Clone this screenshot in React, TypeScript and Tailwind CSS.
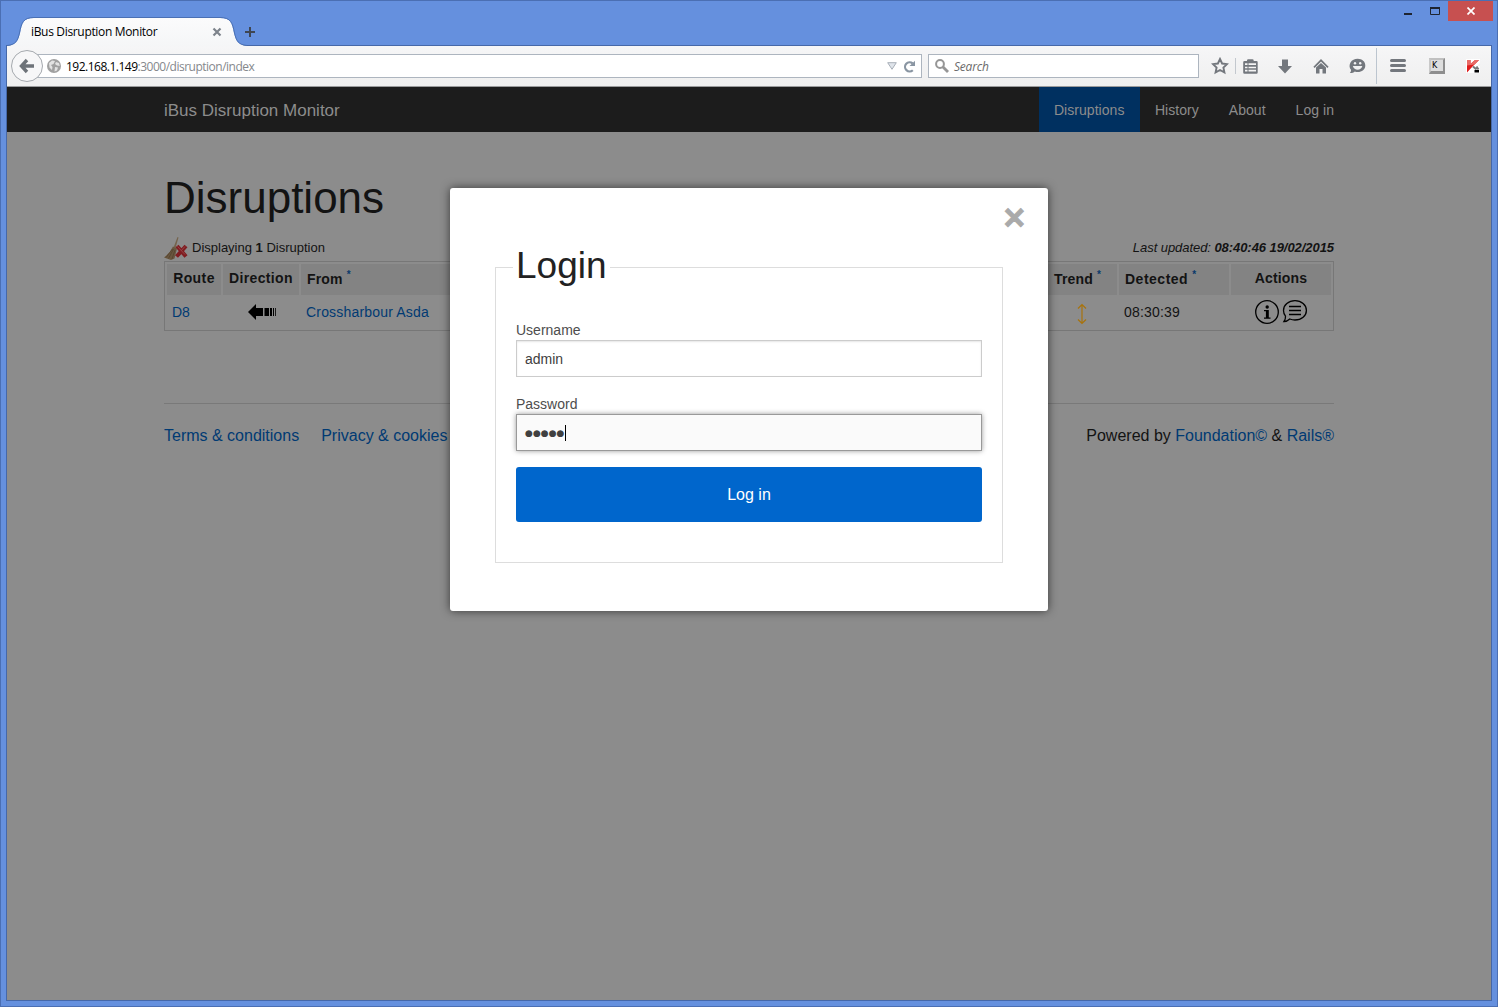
import type { ReactNode } from "react";

const ui = "font-['Open_Sans','Noto_Sans',sans-serif]";

function TabStrip() {
  return (
    <div className="flex h-[44px] shrink-0 items-start justify-between">
      <div className="relative flex h-[44px] items-center pl-[30px] pt-[18px]">
        <svg className="absolute left-[5px] top-[15px]" width="242" height="32" viewBox="6 16 242 32">
          <defs>
            <linearGradient id="tab" x1="0" y1="0" x2="0" y2="1">
              <stop offset="0" stopColor="#fbfbfc" />
              <stop offset="1" stopColor="#f5f6f7" />
            </linearGradient>
          </defs>
          <path
            d="M7 46 C16 45 18 41 20 33 C22 23 23 18 34 18 H220 C231 18 232 23 234 33 C236 41 238 45 247 46 V47 H7Z"
            fill="url(#tab)"
          />
          <path
            d="M7 45.5 C16 44.5 17.5 41 19.5 33 C21.5 23 23 17.5 34 17.5 H220 C231 17.5 232.500 23 234.500 33 C236.500 41 238 44.500 247 45.500"
            fill="none"
            stroke="#4a70b4"
          />
        </svg>
        <span className="relative w-[181px] text-[12px] leading-[18px] tracking-[-0.33px] text-black">iBus Disruption Monitor</span>
        <svg className="relative" width="10" height="10" viewBox="0 0 10 10">
          <path d="M1.500 1.500 8.500 8.500M8.500 1.500 1.500 8.500" stroke="#7d838b" strokeWidth="2.200" />
        </svg>
        <svg className="relative ml-[22px]" width="12" height="12" viewBox="0 0 12 12">
          <path d="M6 1v10M1 6h10" stroke="#3f4652" strokeWidth="2" />
        </svg>
      </div>
      <div className="mr-[4px] flex h-[20px] items-center">
        <svg width="8" height="2" viewBox="0 0 8 2" className="mr-[18px] mt-[6px]">
          <rect width="8" height="2" fill="#1e2430" />
        </svg>
        <svg width="10" height="8" viewBox="0 0 10 8" className="mr-[8px] -mt-px">
          <path d="M.5 1v6.500h9V1" fill="none" stroke="#1e2430" />
          <path d="M0 1h10" stroke="#1e2430" strokeWidth="2" />
        </svg>
        <div className="flex h-[20px] w-[45px] items-center justify-center bg-[#c75050]">
          <svg width="8" height="8" viewBox="0 0 8 8">
            <path d="M.5.5l7 7M7.500.5l-7 7" stroke="#fff" strokeWidth="1.700" />
          </svg>
        </div>
      </div>
    </div>
  );
}

function Toolbar() {
  return (
    <div className="relative h-[41px] shrink-0 border-b border-[#9a9b9c] bg-linear-to-b from-[#f6f6f7] to-[#efefef]">
      <div className="flex h-full items-center">
        <div className="relative z-10 ml-[4px] flex size-[32px] shrink-0 items-center justify-center rounded-full border border-[#a5a9ae] bg-[#f7f7f8]">
          <svg width="16" height="16" viewBox="0 0 16 16">
            <path d="M8 2 2.500 8 8 14M3 8h12" fill="none" stroke="#6e7379" strokeWidth="3.400" />
          </svg>
        </div>
        <div className="-ml-[8px] flex h-[24px] w-[887px] items-center border border-[#adb5bf] bg-white pl-[11px]">
          <svg width="14" height="14" viewBox="0 0 14 14">
            <circle cx="7" cy="7" r="7" fill="#a0a0a0" />
            <path d="M2 4 5 1.500 8 2 6.500 5 4 6 5.500 8 5 11 2.500 8.500ZM9 3l3 1 .8 3L10 6.500 8 5ZM8 8l3 .5-1 3-2.500 1Z" fill="#e2e2e2" />
          </svg>
          <span className="ml-[5px] pt-px text-[12px] leading-[18px] tracking-[-0.5px] text-[#85888c]">
            <span className="text-black">192.168.1.149</span>:3000/disruption/index
          </span>
          <svg className="ml-auto" width="10" height="8" viewBox="0 0 10 8">
            <path d="M.7.700h8.600L5 7.300Z" fill="#dfe4ea" stroke="#a8afb8" />
          </svg>
          <svg className="ml-[6px] mr-[5px]" width="13" height="13" viewBox="0 0 13 13">
            <path d="M9.800 10.200A4.600 4.600 0 1 1 9.600 3.300" fill="none" stroke="#8995a2" strokeWidth="2.200" />
            <path d="M12 .8V6H6.500Z" fill="#8995a2" />
          </svg>
        </div>
        <div className="ml-[6px] flex h-[24px] w-[271px] items-center border border-[#adb5bf] bg-white pl-[6px]">
          <svg width="14" height="14" viewBox="0 0 14 14">
            <circle cx="5" cy="5" r="3.900" fill="none" stroke="#969696" strokeWidth="2" />
            <path d="m8 8 5 5" stroke="#969696" strokeWidth="2.800" />
          </svg>
          <span className="ml-[5px] pt-px text-[12px] italic leading-[18px] tracking-[-0.2px] text-[#6b6b6b]">Search</span>
        </div>
        <svg className="ml-[12px]" width="18" height="18" viewBox="0 0 18 18">
          <path d="m9 2 2.100 4.500 4.900.6-3.600 3.400 1 4.900L9 13l-4.400 2.400 1-4.900L2 7.100l4.900-.6Z" fill="none" stroke="#73777d" strokeWidth="1.900" />
        </svg>
        <div className="ml-[6px] h-[16px] w-px bg-[#c3c8ce]" />
        <svg className="ml-[7px]" width="15" height="15" viewBox="0 0 15 15">
          <path d="M4 2V1.500Q4 .2 5.300.2h4Q10.700.2 10.700 1.500V2H13.500Q14.700 2 14.700 3.200V13.500Q14.700 14.800 13.500 14.800H1.500Q.2 14.800.2 13.500V3.200Q.2 2 1.500 2Z" fill="#73777d" />
          <path d="M2 5.200h2.500M5.500 5.200h7.500M2 8.500h2.500M5.500 8.500h7.500M2 11.700h2.500M5.500 11.700h7.500" stroke="#f4f4f4" strokeWidth="1.700" />
        </svg>
        <svg className="ml-[20px]" width="15" height="15" viewBox="0 0 15 15">
          <path d="M4 .5h6V7H14L7 14.500 0 7H4Z" fill="#73777d" />
        </svg>
        <svg className="ml-[20px]" width="17" height="15" viewBox="0 0 17 15">
          <path d="M1 8.300 8 1.300 15 8.300" fill="none" stroke="#73777d" strokeWidth="1.700" />
          <path d="M3 8.500 8 4l5 4.500V14.500H9.500V10h-3v4.500H3Z" fill="#73777d" />
        </svg>
        <svg className="ml-[19px]" width="17" height="16" viewBox="0 0 17 16">
          <path d="M8.700.8C13 .8 16.300 3.600 16.300 7.500S13 14 8.700 14c-1 0-2-.1-2.900-.5C4.500 14.700 2.500 15.200.8 15c1-.8 1.300-2 1.200-3.200C.2 9.500.1 7 1.500 4.400 3 2.100 5.600.8 8.700.8Z" fill="#73777d" />
          <circle cx="6" cy="5.200" r="1.200" fill="#f2f2f2" />
          <circle cx="11.200" cy="5.200" r="1.200" fill="#f2f2f2" />
          <path d="M3.800 8h9.600Q12 11.800 8.600 11.800T3.800 8Z" fill="#f2f2f2" />
        </svg>
        <div className="ml-[10px] h-[36px] w-px bg-[#bcc5cf]" />
        <svg className="ml-[13px]" width="16" height="14" viewBox="0 0 16 14">
          <path d="M1.500 1.500h13M1.500 6.500h13M1.500 11.500h13" stroke="#73777d" strokeWidth="3" strokeLinecap="round" />
        </svg>
        <div className="ml-[23px] flex h-[16px] w-[16px] items-start justify-start border-2 border-b-[3px] border-l-[#c9c9c9] border-t-[#c0c0c0] border-r-[#8e8e8e] border-b-[#8e8e8e] bg-[#dedede] pl-px">
          <span className="font-['DejaVu_Sans'] text-[8px] leading-[11px] text-black">K</span>
        </div>
        <svg className="ml-[21px]" width="15" height="15" viewBox="0 0 15 15">
          <path d="M0 0h14v4l-3 3h3v7H0Z" fill="#fff" />
          <path d="M1 1h3.500v4L9 1h4L6.500 7.500 1 13.500Z" fill="#e01c1c" />
          <path d="M1 1h3.500v4L9 1h4L8.500 5.500 1 6.500Z" fill="#e86b66" />
          <path d="m7 7.500 3.500 3M10.500 7.500 12.500 10.500" stroke="#777" strokeWidth="2" fill="none" />
          <path d="M8.500 11H13V13.500H8.500Z" fill="#000" />
        </svg>
      </div>
    </div>
  );
}

function NavItem({ label, active = false }: { label: string; active?: boolean }) {
  return (
    <a className={active ? "w-[101px] bg-[#003060] px-[15px] text-[#8c8c8c]" : "px-[15px] text-[#8c8c8c]"}>{label}</a>
  );
}

function HeadCell({ children, star = false, center = false }: { children: ReactNode; star?: boolean; center?: boolean }) {
  return (
    <div className={center ? "flex justify-center bg-[#838383] leading-[29px]" : "flex bg-[#838383] pl-[6px] leading-[31px]"}>
      {children}
      {star && <span className="ml-[4px] text-[10px] leading-[22px] text-[#0a3a6b]">*</span>}
    </div>
  );
}

function DisruptionTable() {
  const cols = "grid grid-cols-[54px_76px_minmax(0,1fr)_69px_110px_100px] gap-x-[2px]";
  return (
    <div className="h-[70px] border border-[#777777] p-[2px] text-[14px]">
      <div className={`${cols} h-[30px] font-bold tracking-[0.18px] text-[#131313]`}>
        <HeadCell center><span className="tracking-[0.4px]">Route</span></HeadCell>
        <HeadCell center><span className="tracking-[0.35px]">Direction</span></HeadCell>
        <HeadCell star>From</HeadCell>
        <HeadCell star>Trend</HeadCell>
        <HeadCell star><span className="tracking-[0.5px]">Detected</span></HeadCell>
        <HeadCell center>Actions</HeadCell>
      </div>
      <div className={`${cols} h-[34px] items-center text-[#131313]`}>
        <span className="pl-[5px] pt-[2px] text-[#003a73]">D8</span>
        <svg className="ml-[25px] mt-[2px]" width="28" height="16" viewBox="0 0 28 16">
          <path d="M0 8 8 0v4h7v8H8v4Z" fill="#000" />
          <path d="M16.500 4H21v8h-4.500ZM22 4h2v8H22ZM25 4h1v8H25ZM27 4h.8v8H27Z" fill="#000" />
        </svg>
        <span className="pl-[5px] pt-[2px] tracking-[0.18px] text-[#003a73]">Crossharbour Asda</span>
        <svg className="ml-[29px] mt-[5px]" width="10" height="22" viewBox="0 0 10 22">
          <path d="M5 1.500v19M1 5.500 5 1.500l4 4M1 16.500l4 4 4-4" fill="none" stroke="#a8730c" strokeWidth="1.200" />
        </svg>
        <span className="pl-[5px] pt-[2px] tracking-[0.2px]">08:30:39</span>
        <div className="flex items-center justify-center pt-px">
          <svg width="26" height="26" viewBox="0 0 26 26">
            <circle cx="13" cy="13" r="11.300" fill="none" stroke="#000" strokeWidth="1.300" />
            <circle cx="13.200" cy="8" r="1.700" fill="#000" />
            <path d="M10 11h4.800v7.500H16.500v1.200H10v-1.200h1.900v-6.300H10Z" fill="#000" />
          </svg>
          <svg className="ml-[2px]" width="26" height="26" viewBox="0 0 26 26">
            <path d="M13 1.700c6.500 0 11.400 4.400 11.400 9.700S19.500 21 13 21c-1.900 0-3.700-.4-5.200-1-1.600 1.500-3.600 2.500-5.800 2.500 1.100-1.500 1.600-3.500 1.500-5.300-1.300-1.700-2-3.600-2-5.800C1.500 6.100 6.500 1.700 13 1.700Z" fill="none" stroke="#000" strokeWidth="1.300" />
            <path d="M7 7.500h12M7 11.500h12M7 15.500h12" stroke="#000" strokeWidth="1.300" />
          </svg>
        </div>
      </div>
    </div>
  );
}

function Broom() {
  return (
    <svg width="24" height="24" viewBox="0 0 24 24">
      <path d="M13.500 0 14.500.5 11.500 11l-1.800-.8Z" fill="#75634c" />
      <path d="M9 9.500 13 11.500 10.500 21.500 7 23 0 20.500Q6 16 9 9.500Z" fill="#69563e" />
      <path d="m9.500 12-5 9.500M11 13 8 22M8.500 12 2 20.500" stroke="#4d3d2a" strokeWidth=".6" />
      <path d="M13 9 22 19.500M22 9 12.500 19.500" stroke="#801d21" strokeWidth="4" />
      <path d="m13.500 9.500 7.500 8M21 9.500 17 14" stroke="#954346" strokeWidth="1" />
    </svg>
  );
}

function LoginDialog() {
  return (
    <div className="absolute left-[443px] top-[101px] h-[423px] w-[598px] rounded-[3px] bg-white px-[45px] pt-[52px] shadow-[0_0_10px_rgba(0,0,0,0.6)]">
      <button
        className="absolute right-[23px] top-[10px] text-[37px] font-bold leading-[40px] text-[#aaaaaa] [-webkit-text-stroke:0.8px_#aaaaaa]"
      >
        ×
      </button>
      <fieldset className="h-[323px] border border-[#dddddd] px-[20px]">
        <legend className="-ml-[3px] px-[3px] pb-[4px] text-[37px] leading-[51px] text-[#222222]">Login</legend>
        <label className="mt-[25px] block text-[14px] leading-[20px] text-[#4d4d4d]">Username</label>
        <div className="flex h-[37px] items-center border border-[#cccccc] bg-white pl-[8px] pt-[2px] text-[14px] text-[#404040] shadow-[inset_0_1px_2px_rgba(0,0,0,0.1)]">
          admin
        </div>
        <label className="mt-[17px] block text-[14px] leading-[20px] text-[#4d4d4d]">Password</label>
        <div className="flex h-[37px] items-center border border-[#999999] bg-[#fafafa] pl-[8px] text-[#404040] shadow-[0_0_5px_#999999]">
          <span className="w-[40px] font-['DejaVu_Sans'] text-[9px] leading-[16px] tracking-[0.05px]">●●●●●</span>
          <span className="h-[16px] w-px bg-black" />
        </div>
        <button className="mt-[16px] block h-[55px] w-full rounded-[3px] bg-[#0066cc] text-[16px] text-white">Log in</button>
      </fieldset>
    </div>
  );
}

export default function App() {
  return (
    <div className="flex h-[1007px] w-[1498px] flex-col overflow-hidden border border-[#4b6fb3] bg-[#6590de]">
      <div className={ui}>
        <TabStrip />
      </div>
      <div className="mx-[5px] mb-[5px] flex flex-1 flex-col border border-[#4668a8]">
        <div className={ui}>
          <Toolbar />
        </div>
        <div className="relative flex-1 bg-[#8c8c8c] font-['Liberation_Sans',Arial,sans-serif]">
          <nav className="flex h-[45px] justify-between bg-[#1c1c1c] pl-[157px] pr-[142px] leading-[46px]">
            <span className="pt-px text-[17px] text-[#8c8c8c]">iBus Disruption Monitor</span>
            <div className="flex text-[14px] tracking-[0.04px]">
              <NavItem label="Disruptions" active />
              <NavItem label="History" />
              <NavItem label="About" />
              <NavItem label="Log in" />
            </div>
          </nav>
          <main className="ml-[157px] w-[1170px] pt-[35px]">
            <h1 className="text-[44px] leading-[62px] text-[#131313]">Disruptions</h1>
            <div className="flex h-[32px] justify-between pt-[8px] text-[13px] leading-[21px] text-[#131313]">
              <div className="flex">
                <Broom />
                <span className="ml-[4px]">
                  Displaying <b>1</b> Disruption
                </span>
              </div>
              <em className="tracking-[-0.06px]">
                Last updated: <b>08:40:46 19/02/2015</b>
              </em>
            </div>
            <DisruptionTable />
            <footer className="mt-[72px] flex justify-between border-t border-[#797979] pt-[20px] text-[16px] leading-[24px] text-[#131313]">
              <div className="flex gap-[22px] text-[#003a73]">
                <a>Terms &amp; conditions</a>
                <a>Privacy &amp; cookies</a>
              </div>
              <span>
                Powered by <a className="text-[#003a73]">Foundation©</a> &amp; <a className="text-[#003a73]">Rails®</a>
              </span>
            </footer>
          </main>
          <LoginDialog />
        </div>
      </div>
    </div>
  );
}
